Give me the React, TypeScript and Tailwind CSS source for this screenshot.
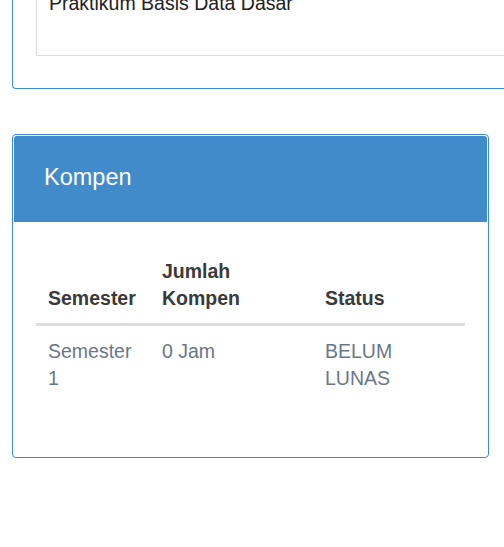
export default function App() {
  const rows = [{ semester: "Semester 1", jumlah: "0 Jam", status: "BELUM LUNAS" }];

  return (
    <div className="h-[547px] w-[504px] overflow-hidden bg-white font-['Liberation_Sans',Arial,sans-serif] text-[19.5px] leading-[27px]">
      {/* previous card, scrolled partly out of view */}
      <div className="-mt-[20px] ml-[12px] rounded-bl-[4px] border-b border-l border-[#3d8bd0] pb-[32px] pl-[23px]">
        <div className="h-[76px] border-b border-l border-[#dcdcdc] pl-[12px] pt-[10px] text-[#222]">
          Praktikum Basis Data Dasar
        </div>
      </div>

      <div className="ml-[12px] mt-[45px] w-[477px] rounded-[4px] border border-[#3d8bd0] p-px">
        <div className="h-[86px] rounded-t-[3px] bg-[#428bca] pl-[30px] pt-[28px] text-[23.5px] leading-[27px] text-white">
          Kompen
        </div>
        <div className="px-[22px] pb-[52px] pt-[24px]">
          <div className="grid grid-cols-[114px_163px_151px] border-b-[3px] border-[#dddddd] font-bold text-[#3a3a3a]">
            <div className="flex items-end px-[12px] pb-[11px] pt-[12px]">Semester</div>
            <div className="flex items-end px-[12px] pb-[11px] pt-[12px]">
              Jumlah
              <br />
              Kompen
            </div>
            <div className="flex items-end px-[12px] pb-[11px] pt-[12px]">Status</div>
          </div>
          {rows.map((r) => (
            <div key={r.semester} className="grid grid-cols-[114px_163px_151px] text-[#6b7785]">
              <div className="p-[12px]">{r.semester}</div>
              <div className="p-[12px]">{r.jumlah}</div>
              <div className="p-[12px]">{r.status}</div>
            </div>
          ))}
        </div>
      </div>
    </div>
  );
}
